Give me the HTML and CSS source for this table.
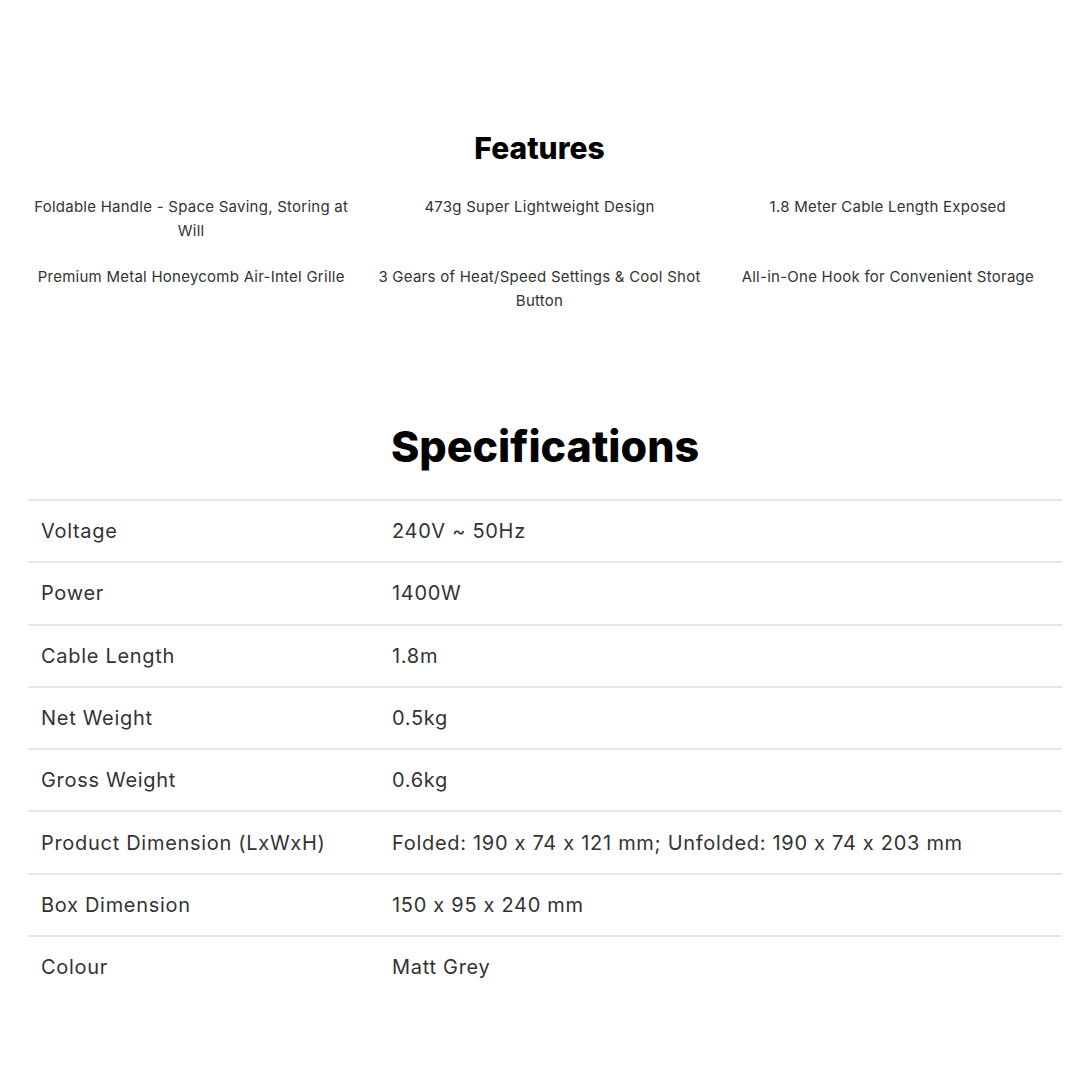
FILE: index.html
```html
<!DOCTYPE html>
<html lang="en">
<head>
<meta charset="utf-8">
<title>Features &amp; Specifications</title>
<link rel="stylesheet" href="styles.css">
</head>
<body>
<main class="page">
  <section class="features">
    <h2 class="features-title">Features</h2>
    <div class="features-grid">
      <p class="feature">Foldable Handle - Space Saving, Storing at Will</p>
      <p class="feature">473g Super Lightweight Design</p>
      <p class="feature">1.8 Meter Cable Length Exposed</p>
      <p class="feature">Premium Metal Honeycomb Air-Intel Grille</p>
      <p class="feature">3 Gears of Heat/Speed Settings &amp; Cool Shot Button</p>
      <p class="feature">All-in-One Hook for Convenient Storage</p>
    </div>
  </section>
  <section class="specs">
    <h2 class="specs-title">Specifications</h2>
    <table class="specs-table">
      <tbody>
        <tr><td class="label">Voltage</td><td class="value">240V ~ 50Hz</td></tr>
        <tr><td class="label">Power</td><td class="value">1400W</td></tr>
        <tr><td class="label">Cable Length</td><td class="value">1.8m</td></tr>
        <tr><td class="label">Net Weight</td><td class="value">0.5kg</td></tr>
        <tr><td class="label">Gross Weight</td><td class="value">0.6kg</td></tr>
        <tr><td class="label">Product Dimension (LxWxH)</td><td class="value">Folded: 190 x 74 x 121 mm; Unfolded: 190 x 74 x 203 mm</td></tr>
        <tr><td class="label">Box Dimension</td><td class="value">150 x 95 x 240 mm</td></tr>
        <tr><td class="label">Colour</td><td class="value">Matt Grey</td></tr>
      </tbody>
    </table>
  </section>
</main>
</body>
</html>
```
FILE: styles.css
```css
html, body {
  margin: 0;
  padding: 0;
  background: #ffffff;
}
body {
  font-family: "Inter", "Liberation Sans", sans-serif;
  font-feature-settings: "calt" 0;
  color: #333333;
}
.page {
  padding: 130px 18px 0 28px;
}
.features {
  margin-left: -11px;
}
.features-title {
  margin: 0;
  text-align: center;
  font-size: 30px;
  line-height: 36px;
  font-weight: 800;
  color: #000;
}
.features-grid {
  margin-top: 29px;
  display: grid;
  grid-template-columns: repeat(3, 1fr);
  row-gap: 22px;
}
.feature {
  margin: 0;
  padding: 0 9px;
  text-align: center;
  font-size: 15px;
  line-height: 24px;
  letter-spacing: 0.25px;
  color: #333;
}
.specs {
  margin-top: 107px;
}
.specs-title {
  margin: 0 0 27px;
  text-align: center;
  font-size: 43px;
  line-height: 52px;
  font-weight: 800;
  color: #000;
}
.specs-table {
  width: 100%;
  border-collapse: collapse;
  border-top: 2px solid #e6e6e6;
}
.specs-table tr + tr td {
  border-top: 2px solid #e6e6e6;
}
.specs-table td {
  height: 60.3px;
  padding: 0 13px;
  font-size: 20px;
  letter-spacing: 0.7px;
  color: #333;
  vertical-align: middle;
}
.specs-table .label {
  width: 325px;
}
.specs-table .value {
  padding-left: 13px;
}
```
